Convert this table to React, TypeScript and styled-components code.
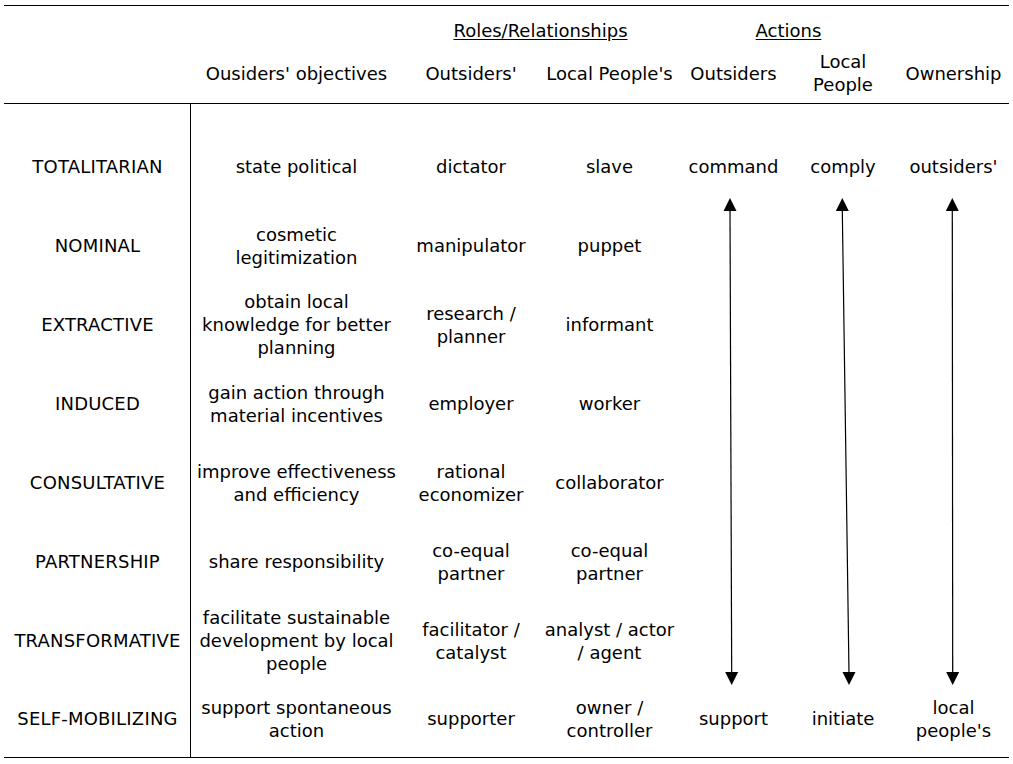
import React from "react";
import styled, { createGlobalStyle } from "styled-components";

const GlobalStyle = createGlobalStyle`
  html, body { margin: 0; padding: 0; background: #fff; }
  body { font-family: "DejaVu Sans", Verdana, sans-serif; color: #000; }
`;

const COLS = "187px 211px 138px 139px 109px 110px 111px";

const Table = styled.div`
  margin: 5px 0 0 4px;
  width: 1005px;
  border-top: 1px solid #000;
  border-bottom: 1px solid #000;
  font-size: 18px;
  line-height: 23px;
`;

const Header = styled.div`
  display: grid;
  grid-template-columns: ${COLS};
  grid-template-rows: 23px 46px;
  row-gap: 8px;
  padding: 13px 0 7px;
  border-bottom: 1px solid #000;
`;

const Cell = styled.div<{ $col?: string; $row?: string }>`
  display: flex;
  flex-direction: column;
  align-items: center;
  justify-content: center;
  text-align: center;
  white-space: nowrap;
  ${(p) => (p.$col ? `grid-column: ${p.$col};` : "")}
  ${(p) => (p.$row ? `grid-row: ${p.$row};` : "")}
`;

const Label = styled(Cell)`
  letter-spacing: 0.2px;
`;

const GroupTitle = styled(Cell)`
  text-decoration: underline;
  text-underline-offset: 2px;
`;

const Body = styled.div`
  display: grid;
  grid-template-columns: ${COLS};
  grid-template-rows: 23px repeat(7, 79px) 77px;
`;

const Divider = styled.div`
  grid-column: 1;
  grid-row: 1 / -1;
  border-right: 1px solid #000;
`;

const ArrowLayer = styled.svg`
  grid-column: 5 / -1;
  grid-row: 1 / -1;
  width: 330px;
  height: 653px;
  pointer-events: none;
`;

type Row = {
  label: string;
  obj: string[];
  out: string[];
  loc: string[];
  a1?: string[];
  a2?: string[];
  own?: string[];
};

const rows: Row[] = [
  { label: "TOTALITARIAN", obj: ["state political"], out: ["dictator"], loc: ["slave"], a1: ["command"], a2: ["comply"], own: ["outsiders'"] },
  { label: "NOMINAL", obj: ["cosmetic", "legitimization"], out: ["manipulator"], loc: ["puppet"] },
  { label: "EXTRACTIVE", obj: ["obtain local", "knowledge for better", "planning"], out: ["research /", "planner"], loc: ["informant"] },
  { label: "INDUCED", obj: ["gain action through", "material incentives"], out: ["employer"], loc: ["worker"] },
  { label: "CONSULTATIVE", obj: ["improve effectiveness", "and efficiency"], out: ["rational", "economizer"], loc: ["collaborator"] },
  { label: "PARTNERSHIP", obj: ["share responsibility"], out: ["co-equal", "partner"], loc: ["co-equal", "partner"] },
  { label: "TRANSFORMATIVE", obj: ["facilitate sustainable", "development by local", "people"], out: ["facilitator /", "catalyst"], loc: ["analyst / actor", "/ agent"] },
  { label: "SELF-MOBILIZING", obj: ["support spontaneous", "action"], out: ["supporter"], loc: ["owner /", "controller"], a1: ["support"], a2: ["initiate"], own: ["local", "people's"] },
];

const Lines = ({ lines }: { lines: string[] }) => (
  <>
    {lines.map((l, i) => (
      <span key={i}>{l}</span>
    ))}
  </>
);

const arrows = [
  { x1: 51, y1: 94, x2: 52.7, y2: 581 },
  { x1: 163.3, y1: 94, x2: 170, y2: 581 },
  { x1: 273.3, y1: 94, x2: 273.7, y2: 581 },
];

const Arrow = ({ x1, y1, x2, y2 }: { x1: number; y1: number; x2: number; y2: number }) => {
  const h = 13;
  const w = 6.5;
  return (
    <g>
      <line x1={x1} y1={y1 + h - 1} x2={x2} y2={y2 - h + 1} stroke="#000" strokeWidth={1.2} />
      <polygon points={`${x1},${y1} ${x1 - w},${y1 + h} ${x1 + w},${y1 + h}`} fill="#000" />
      <polygon points={`${x2},${y2} ${x2 - w},${y2 - h} ${x2 + w},${y2 - h}`} fill="#000" />
    </g>
  );
};

export default function App() {
  return (
    <>
      <GlobalStyle />
      <Table>
        <Header>
          <GroupTitle $col="3 / 5" $row="1">Roles/Relationships</GroupTitle>
          <GroupTitle $col="5 / 7" $row="1">Actions</GroupTitle>
          <Cell $col="2" $row="2">Ousiders' objectives</Cell>
          <Cell $col="3" $row="2">Outsiders'</Cell>
          <Cell $col="4" $row="2">Local People's</Cell>
          <Cell $col="5" $row="2">Outsiders</Cell>
          <Cell $col="6" $row="2">
            <span>Local</span>
            <span>People</span>
          </Cell>
          <Cell $col="7" $row="2">Ownership</Cell>
        </Header>
        <Body>
          <Divider />
          {rows.map((r, i) => {
            const row = String(i + 2);
            return (
              <React.Fragment key={r.label}>
                <Label $col="1" $row={row}>{r.label}</Label>
                <Cell $col="2" $row={row}><Lines lines={r.obj} /></Cell>
                <Cell $col="3" $row={row}><Lines lines={r.out} /></Cell>
                <Cell $col="4" $row={row}><Lines lines={r.loc} /></Cell>
                {r.a1 && <Cell $col="5" $row={row}><Lines lines={r.a1} /></Cell>}
                {r.a2 && <Cell $col="6" $row={row}><Lines lines={r.a2} /></Cell>}
                {r.own && <Cell $col="7" $row={row}><Lines lines={r.own} /></Cell>}
              </React.Fragment>
            );
          })}
          <ArrowLayer viewBox="0 0 330 653">
            {arrows.map((a, i) => (
              <Arrow key={i} {...a} />
            ))}
          </ArrowLayer>
        </Body>
      </Table>
    </>
  );
}
